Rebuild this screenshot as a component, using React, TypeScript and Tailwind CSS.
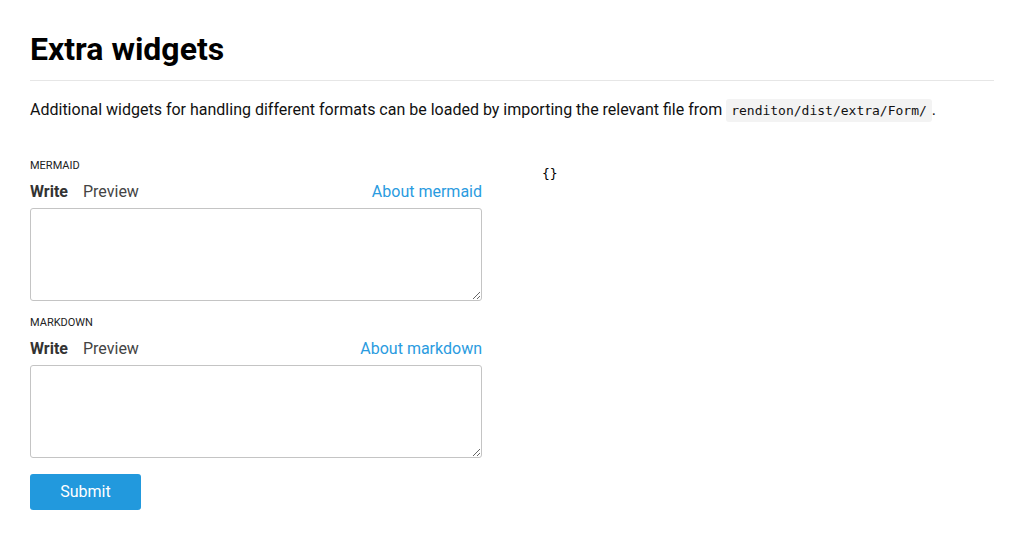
import React from "react";

function Field({ label, about }: { label: string; about: string }) {
  return (
    <div className="flex flex-col">
      <div className="text-[11px] leading-[14px] text-[#222] uppercase">{label}</div>
      <div className="mt-[9px] flex items-center justify-between text-[16px] leading-[20px]">
        <div className="flex items-center gap-[15px]">
          <span className="font-bold text-[#333]">Write</span>
          <span className="text-[#444]">Preview</span>
        </div>
        <a className="text-[#2a9be0]">{about}</a>
      </div>
      <textarea className="mt-[6px] h-[93px] w-full rounded-[3px] border border-[#c4c4c4] bg-white" />
    </div>
  );
}

export default function App() {
  return (
    <div className="min-h-[540px] bg-white px-[30px] pt-[29px] text-[#111]" style={{ fontFamily: "Roboto, 'Liberation Sans', sans-serif" }}>
      <h1 className="text-[32px] font-bold leading-[40px] text-black">Extra widgets</h1>
      <div className="mt-[11px] h-px bg-[#e6e6e6]" />
      <p className="mt-[16px] text-[16px] leading-[26px]">
        Additional widgets for handling different formats can be loaded by importing the relevant file from{" "}
        <code className="rounded-[3px] bg-[#f3f3f3] px-[5px] py-[4px] text-[13px] text-[#111]" style={{ fontFamily: "'DejaVu Sans Mono', monospace" }}>
          renditon/dist/extra/Form/
        </code>
        .
      </p>
      <div className="mt-[35px] flex">
        <div className="w-[452px] flex flex-col">
          <Field label="Mermaid" about="About mermaid" />
          <div className="mt-[15px]">
            <Field label="Markdown" about="About markdown" />
          </div>
          <button className="mt-[16px] h-[36px] w-[111px] rounded-[3px] bg-[#2299dd] text-[16px] text-white">Submit</button>
        </div>
        <div className="ml-[60px] pt-[7px]">
          <pre className="text-[13px] leading-[16px] text-black" style={{ fontFamily: "'DejaVu Sans Mono', monospace" }}>{"{}"}</pre>
        </div>
      </div>
    </div>
  );
}
